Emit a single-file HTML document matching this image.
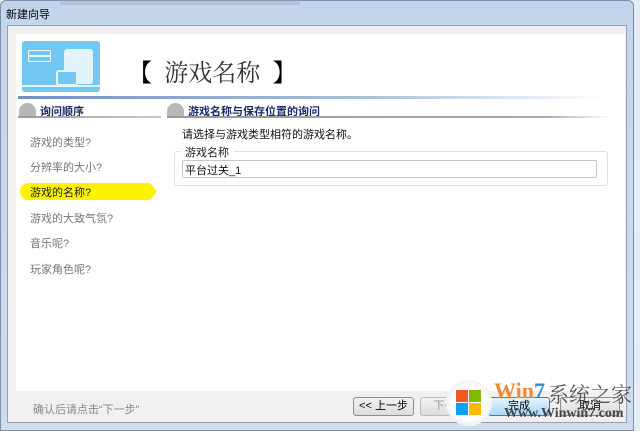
<!DOCTYPE html>
<html><head><meta charset="utf-8"><style>
*{margin:0;padding:0;box-sizing:border-box}
body{width:640px;height:431px;overflow:hidden;background:#e6ecf4;font-family:"Liberation Sans","Noto Sans CJK SC",sans-serif;position:relative}
.a{position:absolute}
.t{font-size:11px;color:#777;white-space:nowrap}
.btn{position:absolute;top:397px;height:19px;border:1px solid #8e8f8f;border-radius:3px;background:linear-gradient(#f2f2f2,#dcdcdc);font-size:11px;text-align:center;line-height:17px;color:#000}
</style></head><body>
<div class="a" style="left:0;top:0;width:634px;height:431px;background:linear-gradient(#c3d5ec,#cfdcee);border:1px solid #7c8ea8;border-radius:6px 6px 0 0"></div>
<div class="a" style="left:60px;top:0;width:240px;height:5px;background:#9aaac0;opacity:.4"></div>
<div class="a t" style="left:6px;top:6px;color:#000;font-size:11px">新建向导</div>
<div class="a" style="left:7px;top:25px;width:620px;height:398px;background:#f0f0f0;border:1px solid #8fa2bb"></div>
<div class="a" style="left:16px;top:34px;width:609px;height:357px;background:#fff"></div>
<div class="a" style="left:22px;top:41px;width:78px;height:51px;background:#72c8f0;border-radius:3px"></div>
<div class="a" style="left:22px;top:85px;width:78px;height:2px;background:#e0f4fc"></div>
<div class="a" style="left:28px;top:50px;width:23px;height:12px;border:1.5px solid #e8f6fd;border-radius:2px"></div>
<div class="a" style="left:28px;top:55px;width:23px;height:1.5px;background:#e8f6fd"></div>
<div class="a" style="left:64px;top:49px;width:29px;height:35px;background:#e3f3fb;border-radius:3px"></div>
<div class="a" style="left:56px;top:70px;width:22px;height:16px;background:#72c8f0;border:2px solid #e3f3fb;border-radius:3px"></div>
<div class="a" style="left:128px;top:53px;font-size:24px;color:#333;font-family:'Noto Serif CJK SC',serif;white-space:nowrap"><b style="color:#000">【</b>&nbsp;&nbsp;游戏名称&nbsp;&nbsp;<b style="color:#000">】</b></div>
<div class="a" style="left:18px;top:96px;width:590px;height:3px;background:linear-gradient(90deg,#6d93c4,#a9c1e2 60%,rgba(255,255,255,0))"></div>
<div class="a" style="left:19px;top:103px;width:17px;height:14px;background:#b8b8b8;border-radius:9px 9px 0 0"></div>
<div class="a" style="left:40px;top:103px;font-size:11px;font-weight:bold;color:#1a2a6a">询问顺序</div>
<div class="a" style="left:18px;top:116px;width:143px;height:2px;background:linear-gradient(90deg,#999,#ccc)"></div>
<div class="a" style="left:167px;top:103px;width:17px;height:14px;background:#b8b8b8;border-radius:9px 9px 0 0"></div>
<div class="a" style="left:188px;top:103px;font-size:11px;font-weight:bold;color:#1a2a6a">游戏名称与保存位置的询问</div>
<div class="a" style="left:167px;top:116px;width:444px;height:2px;background:linear-gradient(90deg,#999,#aaa 85%,rgba(255,255,255,0))"></div>
<div class="a t" style="left:30px;top:134px">游戏的类型?</div>
<div class="a t" style="left:30px;top:159px">分辨率的大小?</div>
<svg class="a" style="left:20px;top:183px" width="138" height="17"><path d="M8 0H130L137 8.5L130 17H8A8 8.5 0 0 1 8 0Z" fill="#fef200"/></svg>
<div class="a t" style="left:30px;top:184px;color:#222">游戏的名称?</div>
<div class="a t" style="left:30px;top:210px">游戏的大致气氛?</div>
<div class="a t" style="left:30px;top:235px">音乐呢?</div>
<div class="a t" style="left:30px;top:261px">玩家角色呢?</div>
<div class="a t" style="left:182px;top:126px;color:#111">请选择与游戏类型相符的游戏名称。</div>
<div class="a" style="left:174px;top:151px;width:434px;height:35px;border:1px solid #dcdfe3;border-radius:3px"></div>
<div class="a t" style="left:180px;top:144px;background:#fff;padding:0 5px;color:#222">游戏名称</div>
<div class="a" style="left:182px;top:160px;width:415px;height:18px;border:1px solid #c5c9ce;border-radius:2px"></div>
<div class="a t" style="left:185px;top:162px;color:#111">平台过关_1</div>
<div class="a t" style="left:33px;top:401px;color:#888">确认后请点击“下一步”</div>
<div class="btn" style="left:353px;width:61px">&lt;&lt; 上一步</div>
<div class="btn" style="left:420px;width:60px;color:#999;border-color:#bbb">下一步</div>
<div class="btn" style="left:488px;width:62px;border-color:#3c7fb1;background:linear-gradient(#e5f4fc,#a9d9f6)">完成</div>
<div class="btn" style="left:560px;width:60px">取消</div>
<div class="a" style="left:446px;top:380px;width:46px;height:46px;border-radius:50%;background:radial-gradient(#fff 50%,#d8dde3)"></div>
<div class="a" style="left:456px;top:390px;width:12px;height:12px;background:#f05a22"></div>
<div class="a" style="left:469px;top:390px;width:12px;height:12px;background:#7fba00"></div>
<div class="a" style="left:456px;top:403px;width:12px;height:12px;background:#00a4ef"></div>
<div class="a" style="left:469px;top:403px;width:12px;height:12px;background:#ffb900"></div>
<div class="a" style="left:494px;top:378px;font-size:22px;font-weight:bold;color:#f08a3a;font-family:'Liberation Serif',serif">Win<span style="color:#2c8fd6">7</span></div>
<div class="a" style="left:548px;top:379px;font-size:21px;color:#555;font-family:'Noto Serif CJK SC',serif">系统之家</div>
<div class="a" style="left:504px;top:406px;font-size:14px;font-weight:bold;color:#444;font-family:'Liberation Serif',serif">Www.Winwin7.com</div>
</body></html>
